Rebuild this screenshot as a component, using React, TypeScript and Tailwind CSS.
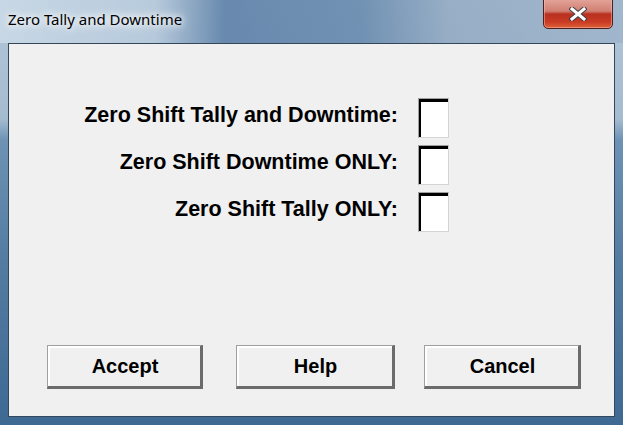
import React from 'react'

const OPTIONS = [
  'Zero Shift Tally and Downtime:',
  'Zero Shift Downtime ONLY:',
  'Zero Shift Tally ONLY:',
]

function CheckBox() {
  return (
    <div className="h-[40px] w-[31px] border border-t-[#a0a0a0] border-l-[#a0a0a0] border-r-[#d4d4d4] border-b-[#d4d4d4]">
      <div className="h-full w-full border-t-[3px] border-l-[2px] border-black bg-white" />
    </div>
  )
}

function DialogButton({ label, className }: { label: string; className: string }) {
  return (
    <button
      type="button"
      className={`h-[44px] border-t border-l border-[#a0a0a0] border-r-[3px] border-b-[3px] border-r-[#6b6b6b] border-b-[#6b6b6b] bg-[#f0f0f0] ${className}`}
    >
      <span className="flex h-full w-full items-center justify-center border-t-2 border-l-2 border-white pb-[2px] text-[20px] font-bold text-black">
        {label}
      </span>
    </button>
  )
}

export default function App() {
  return (
    <div className="relative h-[425px] w-[623px] overflow-hidden bg-[linear-gradient(180deg,#b3c6d8_0%,#a5bbd0_28%,#6d92b4_33%,#557da3_60%,#3d6993_100%)] font-['Liberation_Sans',Arial,sans-serif]">
      {/* aero streaks in the title bar */}
      <div className="pointer-events-none absolute left-0 top-0 h-[43px] w-full bg-[linear-gradient(90deg,rgba(200,216,230,0.95)_0%,rgba(185,204,222,0.7)_25%,rgba(80,118,160,0.75)_36%,rgba(86,124,164,0.7)_58%,rgba(140,164,190,0.7)_72%,rgba(150,174,198,0.6)_100%)]" />

      <div className="relative flex h-[43px] items-start pl-[8px] pt-[9px]">
        <span className="font-['Noto_Sans',sans-serif] text-[15px] leading-[20px] text-black [text-shadow:0_0_6px_#fff,0_0_10px_#fff,0_0_14px_rgba(255,255,255,0.9)]">
          Zero Tally and Downtime
        </span>
      </div>

      <button
        type="button"
        aria-label="Close"
        className="absolute right-[10px] top-[-2px] flex h-[31px] w-[70px] items-center justify-center rounded-b-[5px] border border-[#4a2020] bg-[linear-gradient(180deg,#e4a59a_0%,#d17f72_42%,#b8301f_52%,#c93a24_78%,#df6038_100%)] shadow-[inset_0_0_0_1px_rgba(255,200,190,0.45)]"
      >
        <svg width="18" height="14" viewBox="0 0 18 14">
          <path d="M3 2 L15 12 M15 2 L3 12" stroke="#3f3f4a" strokeWidth="5" strokeLinecap="square" />
          <path d="M3 2 L15 12 M15 2 L3 12" stroke="#ffffff" strokeWidth="3" strokeLinecap="square" />
        </svg>
      </button>

      <div className="mx-[8px] h-[374px] border border-[#34465a] bg-[#f0f0f0]">
        <div className="flex flex-col items-end gap-[7px] pr-[165px] pt-[54px]">
          {OPTIONS.map((option) => (
            <div key={option} className="flex items-center gap-[20px]">
              <span className="pb-[5px] text-[21.5px] font-bold leading-none text-black">{option}</span>
              <CheckBox />
            </div>
          ))}
        </div>

        <div className="mt-[113px] flex pl-[38px]">
          <DialogButton label="Accept" className="w-[156px]" />
          <DialogButton label="Help" className="ml-[33px] w-[159px]" />
          <DialogButton label="Cancel" className="ml-[29px] w-[157px]" />
        </div>
      </div>
    </div>
  )
}
